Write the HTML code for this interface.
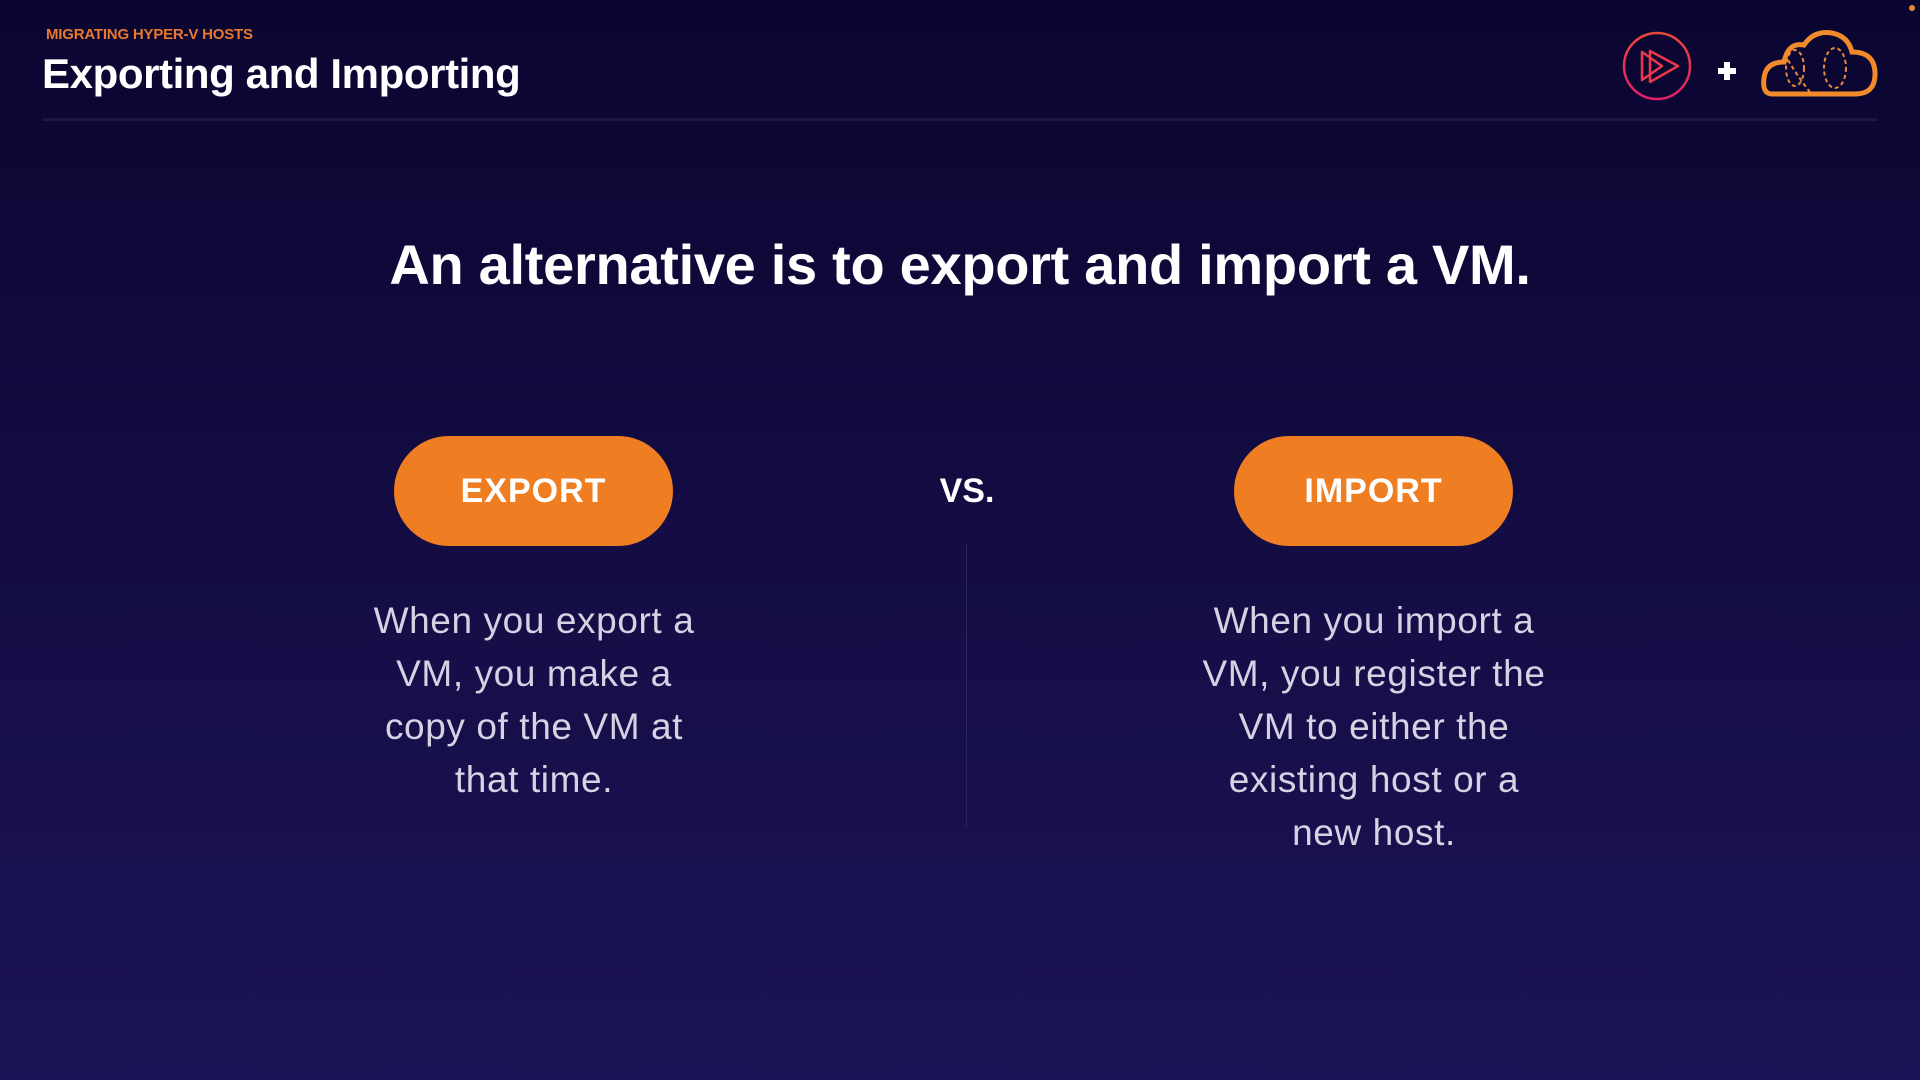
<!DOCTYPE html>
<html><head><meta charset="utf-8"><style>
*{margin:0;padding:0;box-sizing:border-box}
body{width:1920px;height:1080px;overflow:hidden;background:linear-gradient(180deg,#0a0530 0%,#130c42 45%,#1b1456 100%);font-family:"Liberation Sans",sans-serif;position:relative;color:#fff}
.sub{position:absolute;left:46px;top:26px;font-size:15px;font-weight:bold;color:#e8792e;letter-spacing:-0.2px}
.title{position:absolute;left:42px;top:50px;font-size:42px;font-weight:bold;letter-spacing:-0.4px}
.rule{position:absolute;left:43px;top:118px;width:1834px;height:3px;background:#1e1748}
.h{position:absolute;left:0;width:1920px;top:232px;text-align:center;font-size:56px;font-weight:bold;letter-spacing:-0.3px}
.pill{position:absolute;top:436px;width:279px;height:110px;border-radius:55px;background:#ef7d22;text-align:center;line-height:110px;font-size:34px;font-weight:bold;letter-spacing:1px}
.vs{position:absolute;left:917px;width:100px;text-align:center;top:472px;font-size:34px;font-weight:bold}
.vl{position:absolute;left:966px;top:545px;width:1px;height:282px;background:#2c2560}
.body{position:absolute;top:594px;width:440px;text-align:center;font-size:37px;line-height:53px;color:#d6d2e4;white-space:nowrap;letter-spacing:0.6px}
</style></head><body>
<div class="sub">MIGRATING HYPER-V HOSTS</div>
<div class="title">Exporting and Importing</div>
<div class="rule"></div>
<svg style="position:absolute;left:1600px;top:0" width="320" height="130" viewBox="0 0 320 130">
<defs><linearGradient id="g" x1="0" y1="0" x2="0" y2="1"><stop offset="0" stop-color="#e8483a"/><stop offset="1" stop-color="#e0206a"/></linearGradient></defs>
<circle cx="57" cy="66" r="33" fill="none" stroke="url(#g)" stroke-width="2.5"/>
<path d="M42 52 L42 80 L62 66 Z M50 51 L50 82 L78 66 Z" fill="none" stroke="#e8384a" stroke-width="2.5" stroke-linejoin="round"/>
<path d="M118 68h6v-6h6v6h6v6h-6v6h-6v-6h-6z" fill="#fff"/>
<path d="M172 94 Q162 94 164 78 Q166 62 184 62 Q188 42 204 45 Q214 30 232 33 Q248 36 252 52 Q274 52 275 72 Q276 94 255 94 Z" fill="none" stroke="#f08a2a" stroke-width="5"/>
<g fill="none" stroke="#e8883a" stroke-width="2" stroke-dasharray="4 3"><ellipse cx="195" cy="68" rx="9" ry="18"/><ellipse cx="235" cy="68" rx="11" ry="20"/><path d="M188 60 Q200 80 210 92"/></g>
<circle cx="312" cy="8" r="3" fill="#f08a2a"/>
</svg>
<div class="h">An alternative is to export and import a VM.</div>
<div class="pill" style="left:394px">EXPORT</div>
<div class="vs">VS.</div>
<div class="pill" style="left:1234px">IMPORT</div>
<div class="vl"></div>
<div class="body" style="left:314px">When you export a<br>VM, you make a<br>copy of the VM at<br>that time.</div>
<div class="body" style="left:1154px">When you import a<br>VM, you register the<br>VM to either the<br>existing host or a<br>new host.</div>
</body></html>
